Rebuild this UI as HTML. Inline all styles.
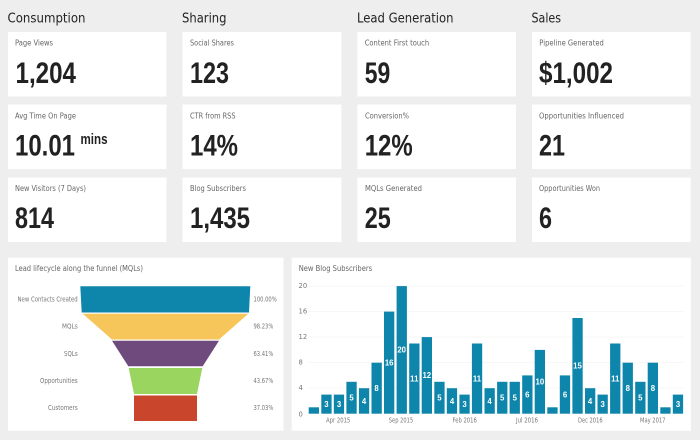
<!DOCTYPE html>
<html><head><meta charset="utf-8"><style>
html,body{margin:0;padding:0;width:700px;height:440px;overflow:hidden;background:#eeeeee}
svg{display:block;filter:blur(.3px)}
text{font-family:"DejaVu Sans",sans-serif}
.h{font-size:13px;fill:#222}
.l{font-size:7.8px;fill:#666}
.n{font-family:"Liberation Sans",sans-serif;font-size:30px;font-weight:bold;fill:#222}
.t{font-size:7.8px;fill:#666}
.f{font-size:6.8px;fill:#777}
.a{font-size:6.8px;fill:#777}
.y{font-size:6.8px;fill:#777}
.v{font-family:"Liberation Sans",sans-serif;font-size:7.8px;font-weight:bold;fill:#fff;text-anchor:middle}
</style></head><body>
<svg width="700" height="440" viewBox="0 0 700 440" xmlns="http://www.w3.org/2000/svg">
<rect width="700" height="440" fill="#eeeeee"/>
<g fill="#fff">
<rect x="8" y="32" width="158.5" height="64.5"/><rect x="8" y="104.5" width="158.5" height="64.5"/><rect x="8" y="177.5" width="158.5" height="64.5"/>
<rect x="182.5" y="32" width="159" height="64.5"/><rect x="182.5" y="104.5" width="159" height="64.5"/><rect x="182.5" y="177.5" width="159" height="64.5"/>
<rect x="357.3" y="32" width="158.7" height="64.5"/><rect x="357.3" y="104.5" width="158.7" height="64.5"/><rect x="357.3" y="177.5" width="158.7" height="64.5"/>
<rect x="532" y="32" width="158.7" height="64.5"/><rect x="532" y="104.5" width="158.7" height="64.5"/><rect x="532" y="177.5" width="158.7" height="64.5"/>
<rect x="8" y="257.7" width="275.5" height="173"/><rect x="291.7" y="257.7" width="399.3" height="173"/>
</g>
<text class="h" x="7.5" y="22.5" textLength="78" lengthAdjust="spacingAndGlyphs">Consumption</text>
<text class="h" x="182" y="22.5" textLength="44.5" lengthAdjust="spacingAndGlyphs">Sharing</text>
<text class="h" x="357" y="22.5" textLength="96.5" lengthAdjust="spacingAndGlyphs">Lead Generation</text>
<text class="h" x="531.5" y="22.5" textLength="29.5" lengthAdjust="spacingAndGlyphs">Sales</text>

<text class="l" x="15" y="45.5" textLength="38" lengthAdjust="spacingAndGlyphs">Page Views</text>
<text class="l" x="190" y="45.5" textLength="44" lengthAdjust="spacingAndGlyphs">Social Shares</text>
<text class="l" x="364.7" y="45.5" textLength="64.5" lengthAdjust="spacingAndGlyphs">Content First touch</text>
<text class="l" x="539.3" y="45.5" textLength="64.5" lengthAdjust="spacingAndGlyphs">Pipeline Generated</text>
<text class="l" x="15" y="118.5" textLength="61" lengthAdjust="spacingAndGlyphs">Avg Time On Page</text>
<text class="l" x="190" y="118.5" textLength="45.5" lengthAdjust="spacingAndGlyphs">CTR from RSS</text>
<text class="l" x="365" y="118.5" textLength="44" lengthAdjust="spacingAndGlyphs">Conversion%</text>
<text class="l" x="539" y="118.5" textLength="85" lengthAdjust="spacingAndGlyphs">Opportunities Influenced</text>
<text class="l" x="15" y="191" textLength="71" lengthAdjust="spacingAndGlyphs">New Visitors (7 Days)</text>
<text class="l" x="190" y="191" textLength="56" lengthAdjust="spacingAndGlyphs">Blog Subscribers</text>
<text class="l" x="365" y="191" textLength="57" lengthAdjust="spacingAndGlyphs">MQLs Generated</text>
<text class="l" x="539" y="191" textLength="61" lengthAdjust="spacingAndGlyphs">Opportunities Won</text>

<text class="n" x="15.5" y="83" textLength="60.5" lengthAdjust="spacingAndGlyphs">1,204</text>
<text class="n" x="190" y="83" textLength="39" lengthAdjust="spacingAndGlyphs">123</text>
<text class="n" x="364.7" y="83" textLength="25.5" lengthAdjust="spacingAndGlyphs">59</text>
<text class="n" x="539" y="83" textLength="74" lengthAdjust="spacingAndGlyphs">$1,002</text>
<text class="n" x="15" y="155.7" textLength="60" lengthAdjust="spacingAndGlyphs">10.01</text>
<text x="80.5" y="144" font-size="14.5" font-weight="bold" fill="#222" style="font-family:'Liberation Sans',sans-serif" textLength="27" lengthAdjust="spacingAndGlyphs">mins</text>
<text class="n" x="190" y="155.7" textLength="48" lengthAdjust="spacingAndGlyphs">14%</text>
<text class="n" x="364.7" y="155.7" textLength="48" lengthAdjust="spacingAndGlyphs">12%</text>
<text class="n" x="539" y="155.7" textLength="26" lengthAdjust="spacingAndGlyphs">21</text>
<text class="n" x="15" y="228" textLength="39" lengthAdjust="spacingAndGlyphs">814</text>
<text class="n" x="190" y="228" textLength="60" lengthAdjust="spacingAndGlyphs">1,435</text>
<text class="n" x="364.7" y="228" textLength="26" lengthAdjust="spacingAndGlyphs">25</text>
<text class="n" x="539" y="228" textLength="13" lengthAdjust="spacingAndGlyphs">6</text>

<text class="t" x="15" y="271" textLength="128" lengthAdjust="spacingAndGlyphs">Lead lifecycle along the funnel (MQLs)</text>
<text class="t" x="298.7" y="271" textLength="73.5" lengthAdjust="spacingAndGlyphs">New Blog Subscribers</text>

<polygon points="80.3,286.3 250.3,286.3 249,312.5 81.7,312.5" fill="#0e85ab"/>
<polygon points="82.7,313.7 248.3,313.7 219,339.5 112,339.5" fill="#f6c65b"/>
<polygon points="112,340.8 219,340.8 202.7,366.3 128.3,366.3" fill="#6f4a7c"/>
<polygon points="128.7,368 202.3,368 197,394 134,394" fill="#9ad65f"/>
<polygon points="134,395.5 197,395.5 197,421 134,421" fill="#c9452b"/>
<text class="f" x="17.5" y="301.5" textLength="60.2" lengthAdjust="spacingAndGlyphs">New Contacts Created</text>
<text class="f" x="62" y="328.5" textLength="15.7" lengthAdjust="spacingAndGlyphs">MQLs</text>
<text class="f" x="64" y="356" textLength="13.7" lengthAdjust="spacingAndGlyphs">SQLs</text>
<text class="f" x="40" y="383" textLength="37.7" lengthAdjust="spacingAndGlyphs">Opportunities</text>
<text class="f" x="48" y="410" textLength="29.7" lengthAdjust="spacingAndGlyphs">Customers</text>
<text class="f" x="253.5" y="301.5" textLength="23.2" lengthAdjust="spacingAndGlyphs">100.00%</text>
<text class="f" x="253.5" y="328.5" textLength="19.8" lengthAdjust="spacingAndGlyphs">98.23%</text>
<text class="f" x="253.5" y="356" textLength="19.8" lengthAdjust="spacingAndGlyphs">63.41%</text>
<text class="f" x="253.5" y="383" textLength="19.8" lengthAdjust="spacingAndGlyphs">43.67%</text>
<text class="f" x="253.5" y="410" textLength="19.8" lengthAdjust="spacingAndGlyphs">37.03%</text>

<g stroke="#f4f4f4" stroke-width=".7">
<line x1="308" x2="684" y1="286" y2="286"/><line x1="308" x2="684" y1="311.5" y2="311.5"/><line x1="308" x2="684" y1="337" y2="337"/><line x1="308" x2="684" y1="362.5" y2="362.5"/><line x1="308" x2="684" y1="388" y2="388"/>
</g>
<text class="y" x="298.5" y="288">20</text><text class="y" x="298.5" y="313.5">16</text><text class="y" x="298.5" y="339">12</text><text class="y" x="298.5" y="364.5">8</text><text class="y" x="298.5" y="390">4</text><text class="y" x="298.5" y="416.5">0</text>

<g fill="#0e85ab">
<rect x="308.7" y="407.3" width="10.3" height="6.4"/>
<rect x="321.3" y="394.6" width="10.3" height="19.1"/>
<rect x="333.8" y="394.6" width="10.3" height="19.1"/>
<rect x="346.4" y="381.8" width="10.3" height="31.9"/>
<rect x="358.9" y="388.2" width="10.3" height="25.5"/>
<rect x="371.5" y="362.7" width="10.3" height="51"/>
<rect x="384" y="311.6" width="10.3" height="102.1"/>
<rect x="396.6" y="286.1" width="10.3" height="127.6"/>
<rect x="409.2" y="343.5" width="10.3" height="70.2"/>
<rect x="421.7" y="337.1" width="10.3" height="76.6"/>
<rect x="434.3" y="381.8" width="10.3" height="31.9"/>
<rect x="446.8" y="388.2" width="10.3" height="25.5"/>
<rect x="459.4" y="394.6" width="10.3" height="19.1"/>
<rect x="471.9" y="343.5" width="10.3" height="70.2"/>
<rect x="484.5" y="388.2" width="10.3" height="25.5"/>
<rect x="497.1" y="381.8" width="10.3" height="31.9"/>
<rect x="509.6" y="381.8" width="10.3" height="31.9"/>
<rect x="522.2" y="375.4" width="10.3" height="38.3"/>
<rect x="534.7" y="349.9" width="10.3" height="63.8"/>
<rect x="547.3" y="407.3" width="10.3" height="6.4"/>
<rect x="559.8" y="375.4" width="10.3" height="38.3"/>
<rect x="572.4" y="318" width="10.3" height="95.7"/>
<rect x="585" y="388.2" width="10.3" height="25.5"/>
<rect x="597.5" y="394.6" width="10.3" height="19.1"/>
<rect x="610.1" y="343.5" width="10.3" height="70.2"/>
<rect x="622.6" y="362.7" width="10.3" height="51"/>
<rect x="635.2" y="381.8" width="10.3" height="31.9"/>
<rect x="647.7" y="362.7" width="10.3" height="51"/>
<rect x="660.3" y="407.3" width="10.3" height="6.4"/>
<rect x="672.8" y="394.6" width="10.3" height="19.1"/>
</g>
<text class="v" x="326.4" y="407">3</text><text class="v" x="339" y="407">3</text><text class="v" x="351.5" y="400.6">5</text><text class="v" x="364" y="403.8">4</text><text class="v" x="376.6" y="391">8</text><text class="v" x="389.2" y="365.5">16</text><text class="v" x="401.7" y="352.7">20</text><text class="v" x="414.3" y="381.4">11</text><text class="v" x="426.8" y="378.2">12</text><text class="v" x="439.4" y="400.6">5</text><text class="v" x="452" y="403.8">4</text><text class="v" x="464.5" y="407">3</text><text class="v" x="477" y="381.4">11</text><text class="v" x="489.6" y="403.8">4</text><text class="v" x="502.2" y="400.6">5</text><text class="v" x="514.8" y="400.6">5</text><text class="v" x="527.3" y="397.4">6</text><text class="v" x="539.9" y="384.6">10</text><text class="v" x="565" y="397.4">6</text><text class="v" x="577.5" y="368.7">15</text><text class="v" x="590.1" y="403.8">4</text><text class="v" x="602.7" y="407">3</text><text class="v" x="615.2" y="381.4">11</text><text class="v" x="627.8" y="391">8</text><text class="v" x="640.3" y="400.6">5</text><text class="v" x="652.9" y="391">8</text><text class="v" x="678" y="407">3</text>

<text class="a" x="326" y="422.5" textLength="24.3" lengthAdjust="spacingAndGlyphs">Apr 2015</text>
<text class="a" x="388.8" y="422.5" textLength="24.3" lengthAdjust="spacingAndGlyphs">Sep 2015</text>
<text class="a" x="452.5" y="422.5" textLength="24.3" lengthAdjust="spacingAndGlyphs">Feb 2016</text>
<text class="a" x="516" y="422.5" textLength="22" lengthAdjust="spacingAndGlyphs">Jul 2016</text>
<text class="a" x="578" y="422.5" textLength="24.6" lengthAdjust="spacingAndGlyphs">Dec 2016</text>
<text class="a" x="640" y="422.5" textLength="25.4" lengthAdjust="spacingAndGlyphs">May 2017</text>
</svg>
</body></html>
